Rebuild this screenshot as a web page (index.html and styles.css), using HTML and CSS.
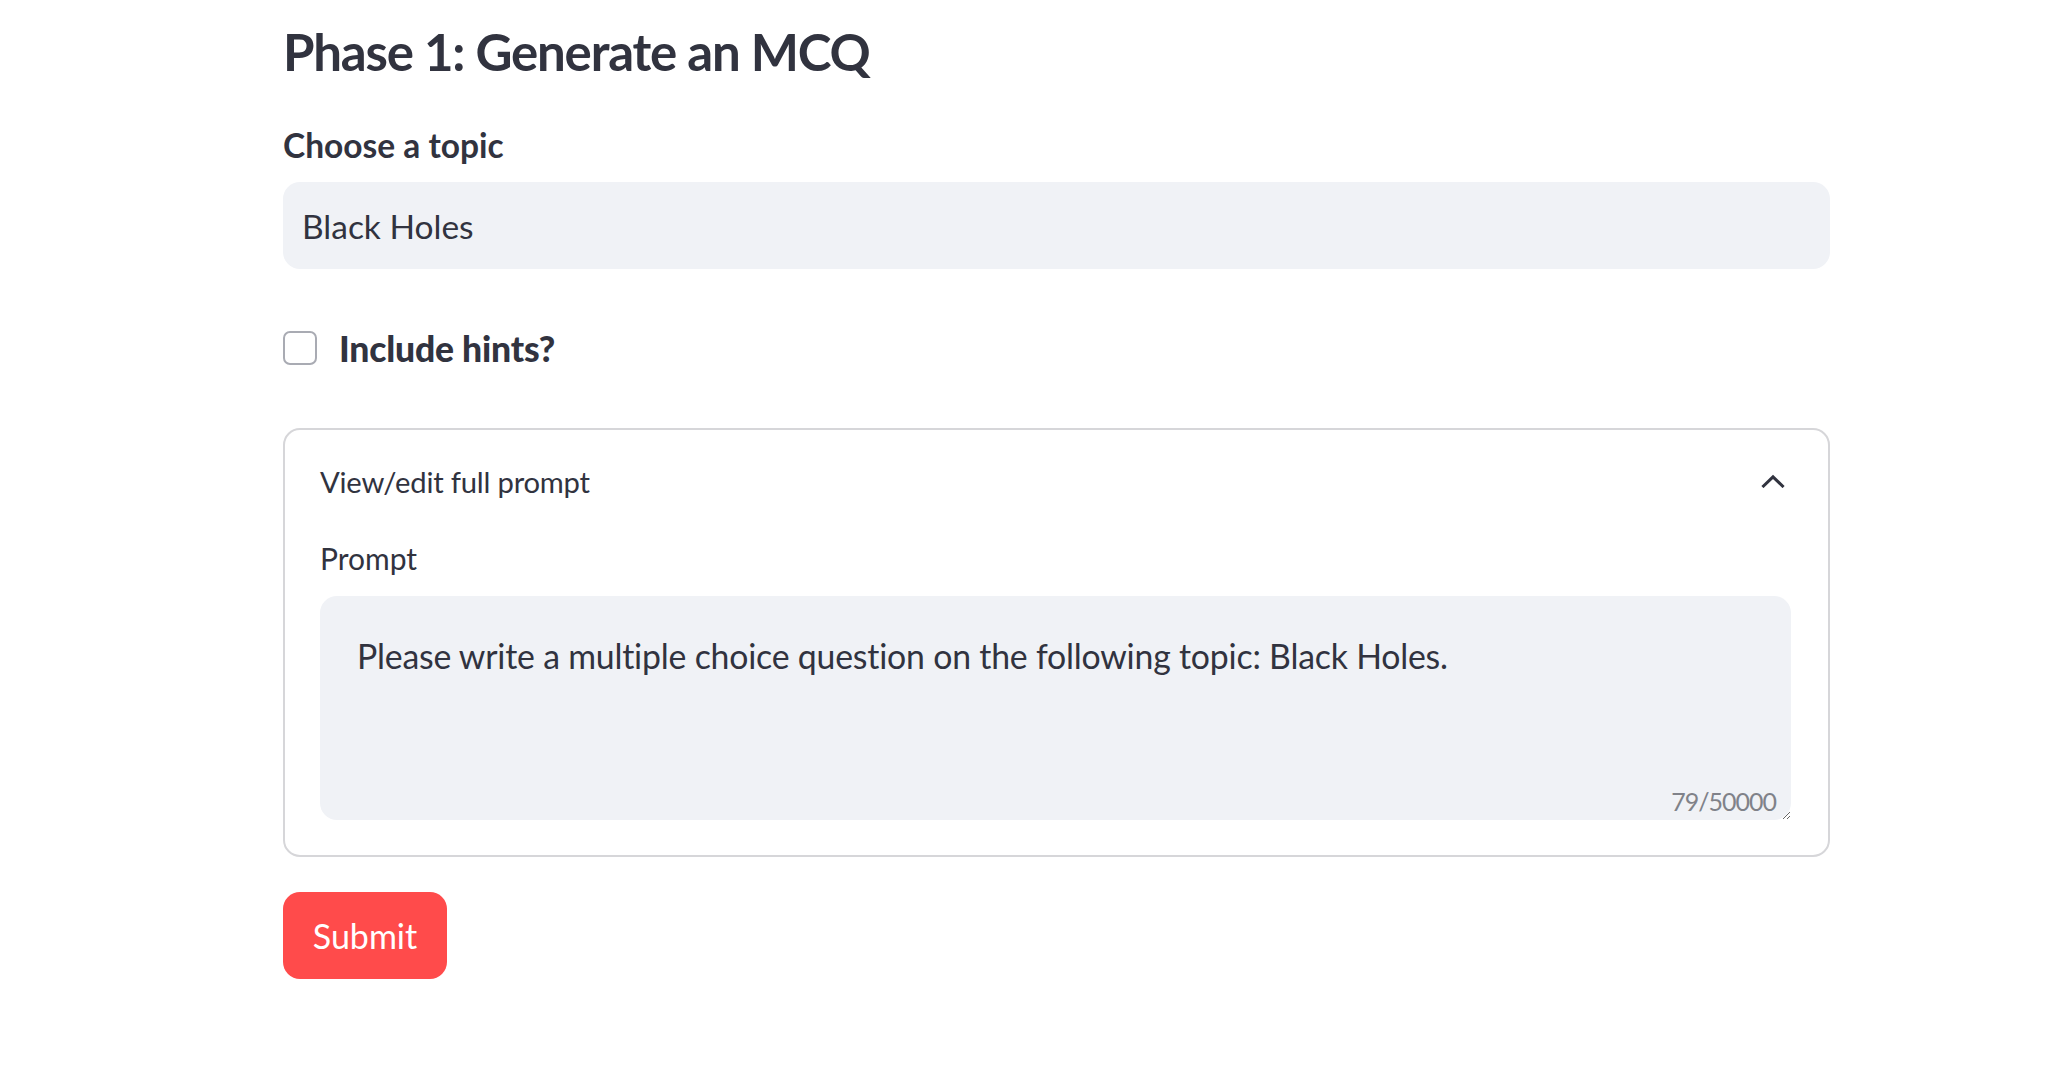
FILE: index.html
```html
<!DOCTYPE html>
<html lang="en">
<head>
<meta charset="utf-8">
<title>Phase 1: Generate an MCQ</title>
<link rel="stylesheet" href="styles.css">
</head>
<body>
<main class="main">
  <h3 class="title">Phase 1: Generate an MCQ</h3>

  <div class="field">
    <label class="field-label" for="topic">Choose a topic</label>
    <div class="text-input"><input id="topic" type="text" value="Black Holes"></div>
  </div>

  <label class="check-row">
    <span class="check-box"></span>
    <span class="check-label">Include hints?</span>
  </label>

  <section class="expander">
    <div class="exp-head">
      <span class="exp-title">View/edit full prompt</span>
      <svg class="chev" viewBox="0 0 24 14" width="24" height="14" aria-hidden="true">
        <path d="M2.5 12 L12 2.8 L21.5 12" fill="none" stroke="#31333f" stroke-width="3" stroke-linecap="square"/>
      </svg>
    </div>
    <div class="exp-body">
      <div class="prompt-label">Prompt</div>
      <div class="area-wrap">
        <textarea class="area" readonly>Please write a multiple choice question on the following topic: Black Holes.</textarea>
        <span class="counter">79/50000</span>
      </div>
    </div>
  </section>

  <button class="submit" type="button">Submit</button>
</main>
</body>
</html>
```
FILE: styles.css
```css
html, body {
  margin: 0;
  padding: 0;
  background: #ffffff;
}
body {
  font-family: "Lato", "Noto Sans", sans-serif;
  color: #31333f;
}
.main {
  width: 1547px;
  margin-left: 283px;
  display: flex;
  flex-direction: column;
  align-items: flex-start;
}
.title {
  margin: 17px 0 0 0;
  font-size: 51px;
  line-height: 70px;
  font-weight: 700;
  letter-spacing: -1.2px;
}
.field {
  width: 100%;
  margin-top: 36px;
  display: flex;
  flex-direction: column;
}
.field-label {
  font-size: 33.5px;
  font-weight: 700;
  line-height: 44px;
  height: 44px;
  margin-bottom: 15px;
}
.text-input {
  height: 87px;
  background: #f0f2f6;
  border-radius: 17px;
  display: flex;
  align-items: center;
}
.text-input input {
  border: none;
  background: transparent;
  outline: none;
  font-family: inherit;
  font-size: 33.5px;
  color: #31333f;
  padding: 0 0 0 19px;
  width: 100%;
}
.check-row {
  margin-top: 59px;
  display: flex;
  align-items: center;
  height: 40px;
}
.check-box {
  border: 2px solid #a9abb3;
  border-radius: 7px;
  box-sizing: content-box;
  width: 30px;
  height: 30px;
  flex: none;
}
.check-label {
  margin-left: 22px;
  font-size: 35.5px;
  font-weight: 900;
  letter-spacing: -0.2px;
}
.expander {
  margin-top: 60px;
  width: 100%;
  box-sizing: border-box;
  border: 2px solid #d6d6d9;
  border-radius: 17px;
  padding: 0 37px 35px 35px;
}
.exp-head {
  height: 102px;
  display: flex;
  align-items: center;
  justify-content: space-between;
}
.exp-title {
  font-size: 29.2px;
  letter-spacing: -0.2px;
}
.chev {
  margin-right: 6px;
}
.prompt-label {
  font-size: 30px;
  line-height: 44px;
  margin-top: 4px;
  margin-bottom: 16px;
}
.area-wrap {
  position: relative;
}
.area {
  display: block;
  width: 100%;
  height: 224px;
  box-sizing: border-box;
  border: none;
  outline: none;
  background: #f0f2f6;
  border-radius: 17px;
  resize: vertical;
  font-family: inherit;
  font-size: 33.8px;
  line-height: 50px;
  color: #31333f;
  padding: 35px 37px;
  letter-spacing: -0.2px;
}
.counter {
  position: absolute;
  right: 15px;
  bottom: 1px;
  font-size: 25px;
  line-height: 36px;
  color: #808289;
  letter-spacing: -1px;
}
.submit {
  margin-top: 35px;
  width: 164px;
  height: 87px;
  border: none;
  border-radius: 17px;
  background: #ff4b4b;
  color: #ffffff;
  font-family: inherit;
  font-size: 34px;
  padding: 0;
  margin-bottom: 40px;
}
```
